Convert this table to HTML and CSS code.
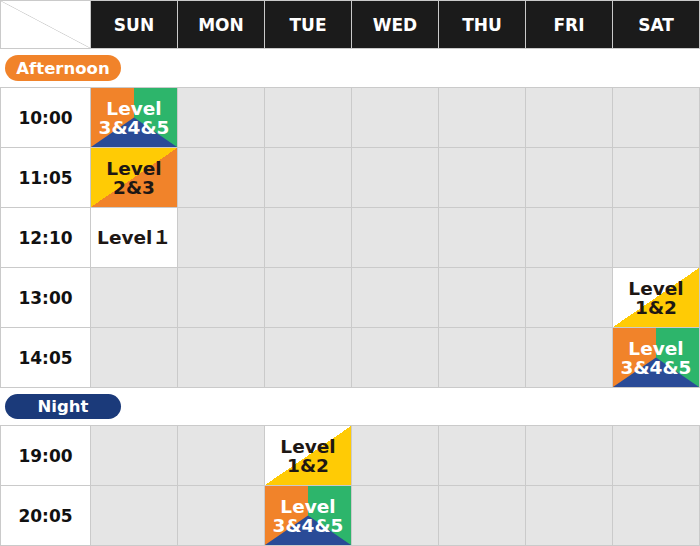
FILE: index.html
```html
<!DOCTYPE html>
<html>
<head>
<meta charset="utf-8">
<link rel="stylesheet" href="styles.css">
</head>
<body>
<div class="tt">
  <div class="grid hdr">
    <div class="corner"></div>
    <div class="day">SUN</div>
    <div class="day">MON</div>
    <div class="day">TUE</div>
    <div class="day">WED</div>
    <div class="day">THU</div>
    <div class="day">FRI</div>
    <div class="day">SAT</div>
  </div>
  <div class="band band-a"><span class="pill pill-a">Afternoon</span></div>
  <div class="grid rows">
    <div class="time">10:00</div>
    <div class="cell lv tri"><span class="txt white">Level<br>3&amp;4&amp;5</span></div>
    <div class="cell"></div><div class="cell"></div><div class="cell"></div><div class="cell"></div><div class="cell"></div><div class="cell"></div>

    <div class="time">11:05</div>
    <div class="cell lv l23"><span class="txt">Level<br>2&amp;3</span></div>
    <div class="cell"></div><div class="cell"></div><div class="cell"></div><div class="cell"></div><div class="cell"></div><div class="cell"></div>

    <div class="time">12:10</div>
    <div class="cell lv l1"><span class="txt">Level１</span></div>
    <div class="cell"></div><div class="cell"></div><div class="cell"></div><div class="cell"></div><div class="cell"></div><div class="cell"></div>

    <div class="time">13:00</div>
    <div class="cell"></div><div class="cell"></div><div class="cell"></div><div class="cell"></div><div class="cell"></div><div class="cell"></div>
    <div class="cell lv l12"><span class="txt">Level<br>1&amp;2</span></div>

    <div class="time">14:05</div>
    <div class="cell"></div><div class="cell"></div><div class="cell"></div><div class="cell"></div><div class="cell"></div><div class="cell"></div>
    <div class="cell lv tri"><span class="txt white">Level<br>3&amp;4&amp;5</span></div>
  </div>
  <div class="band band-n"><span class="pill pill-n">Night</span></div>
  <div class="grid rows">
    <div class="time">19:00</div>
    <div class="cell"></div><div class="cell"></div>
    <div class="cell lv l12"><span class="txt">Level<br>1&amp;2</span></div>
    <div class="cell"></div><div class="cell"></div><div class="cell"></div><div class="cell"></div>

    <div class="time">20:05</div>
    <div class="cell"></div><div class="cell"></div>
    <div class="cell lv tri"><span class="txt white">Level<br>3&amp;4&amp;5</span></div>
    <div class="cell"></div><div class="cell"></div><div class="cell"></div><div class="cell"></div>
  </div>
</div>
</body>
</html>
```

FILE: styles.css
```css
html, body {
  margin: 0;
  padding: 0;
  background: #fff;
}

body {
  font-family: "DejaVu Sans", Verdana, "Noto Sans CJK JP", sans-serif;
  font-weight: bold;
}

.tt {
  width: 700px;
}

.grid {
  display: grid;
  grid-template-columns: 89px repeat(7, 86px);
  gap: 1px;
  padding: 1px;
  background: #cacaca;
}

.hdr {
  grid-template-rows: 47px;
}

.rows {
  grid-auto-rows: 59px;
}

.corner {
  background:
    linear-gradient(to top right, transparent calc(50% - 0.7px), #d2d2d2 50%, transparent calc(50% + 0.7px)),
    #fff;
}

.day {
  background: #1b1b1b;
  color: #fff;
  font-size: 17px;
  display: flex;
  align-items: center;
  justify-content: center;
}

.band {
  display: flex;
  align-items: center;
  padding-left: 5px;
  background: #fff;
}

.band-a {
  height: 38px;
}

.band-n {
  height: 37px;
}

.pill {
  width: 116px;
  height: 26px;
  border-radius: 13px;
  color: #fff;
  font-size: 16.5px;
  display: flex;
  align-items: center;
  justify-content: center;
}

.pill-a {
  background: #f1832a;
}

.pill-n {
  height: 25px;
  background: #1b3a7a;
}

.time {
  background: #fff;
  color: #111;
  font-size: 17px;
  display: flex;
  align-items: center;
  justify-content: center;
}

.cell {
  background: #e5e5e5;
}

.lv {
  position: relative;
  display: flex;
  align-items: center;
  justify-content: center;
  text-align: center;
}

.txt {
  position: relative;
  font-size: 18.5px;
  line-height: 19px;
  color: #1e1714;
}

.txt.white {
  color: #fff;
}

.l1 {
  background: #fff;
}

.l23 {
  background: linear-gradient(to top left, #f1832a 50%, #ffcb05 50%);
}

.l12 {
  background: linear-gradient(to top left, #ffcb05 50%, #fff 50%);
}

.tri {
  background: linear-gradient(to right, #f1832a 50%, #2db56b 50%);
}

.tri::before {
  content: "";
  position: absolute;
  inset: 0;
  background: #2a4b97;
  clip-path: polygon(0 100%, 50% 50%, 100% 100%);
}
```
